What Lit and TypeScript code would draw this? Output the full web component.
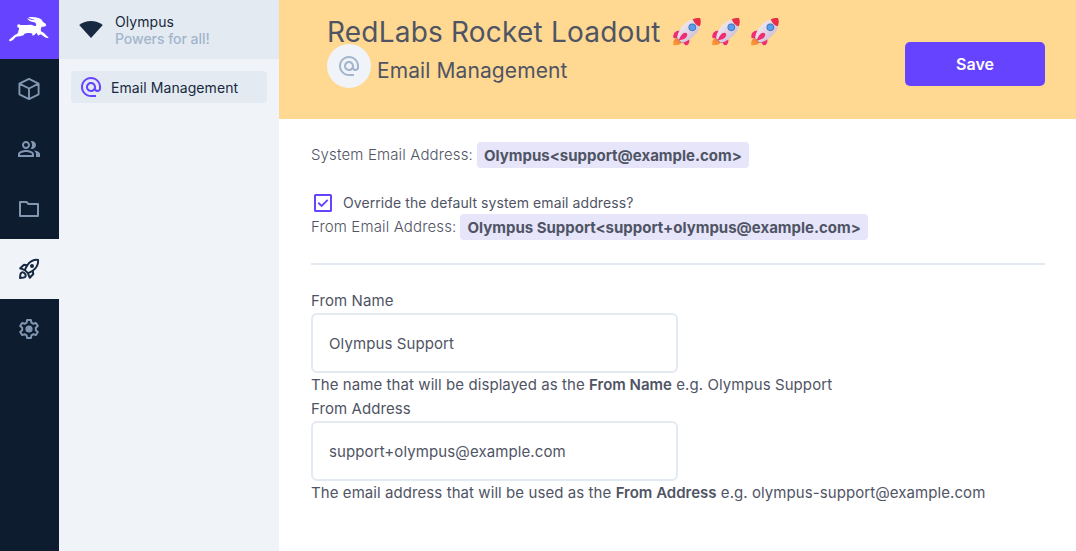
import { LitElement, html, css, svg } from "lit";
import { customElement } from "lit/decorators.js";

const AT = "M12,15C12.81,15 13.5,14.7 14.11,14.11C14.7,13.5 15,12.81 15,12C15,11.19 14.7,10.5 14.11,9.89C13.5,9.3 12.81,9 12,9C11.19,9 10.5,9.3 9.89,9.89C9.3,10.5 9,11.19 9,12C9,12.81 9.3,13.5 9.89,14.11C10.5,14.7 11.19,15 12,15M12,2C14.75,2 17.1,3 19.05,4.95C21,6.9 22,9.25 22,12V13.45C22,14.45 21.65,15.3 21,16C20.3,16.67 19.5,17 18.5,17C17.3,17 16.31,16.5 15.56,15.5C14.56,16.5 13.38,17 12,17C10.63,17 9.45,16.5 8.46,15.54C7.5,14.55 7,13.38 7,12C7,10.63 7.5,9.45 8.46,8.46C9.45,7.5 10.63,7 12,7C13.38,7 14.55,7.5 15.54,8.46C16.5,9.45 17,10.63 17,12V13.45C17,13.86 17.16,14.22 17.46,14.53C17.76,14.84 18.11,15 18.5,15C18.92,15 19.27,14.84 19.57,14.53C19.87,14.22 20,13.86 20,13.45V12C20,9.81 19.23,7.93 17.65,6.35C16.07,4.77 14.19,4 12,4C9.81,4 7.93,4.77 6.35,6.35C4.77,7.93 4,9.81 4,12C4,14.19 4.77,16.07 6.35,17.65C7.93,19.23 9.81,20 12,20H17V22H12C9.25,22 6.9,21 4.95,19.05C3,17.1 2,14.75 2,12C2,9.25 3,6.9 4.95,4.95C6.9,3 9.25,2 12,2Z";

const cube = svg`<path fill="none" stroke="currentColor" stroke-width="1.9" stroke-linejoin="round" d="M12 1.9 21.6 6.7V17.3L12 22.1 2.4 17.3V6.7ZM2.4 6.7 12 11.5 21.6 6.7M12 11.5V22.1"/>`;
const people = svg`<path fill="currentColor" d="M16.67 13.13C18.04 14.06 19 15.32 19 17v3h4v-3c0-2.18-3.57-3.47-6.33-3.87zM15 12c2.21 0 4-1.79 4-4s-1.79-4-4-4c-.47 0-.91.1-1.33.24C14.5 5.27 15 6.58 15 8s-.5 2.73-1.33 3.76c.42.14.86.24 1.33.24zM9 12c2.21 0 4-1.79 4-4s-1.79-4-4-4-4 1.79-4 4 1.79 4 4 4zm0-6c1.1 0 2 .9 2 2s-.9 2-2 2-2-.9-2-2 .9-2 2-2zM9 13c-2.67 0-8 1.34-8 4v3h16v-3c0-2.66-5.33-4-8-4zm6 5H3v-.99C3.2 16.29 6.3 15 9 15s5.8 1.29 6 2v1z"/>`;
const folder = svg`<path fill="none" stroke="currentColor" stroke-width="2" stroke-linejoin="round" d="M3 5H9.5L11.5 7H21V19H3Z"/>`;
const rocket = svg`<g fill="none" stroke="currentColor" stroke-width="2" stroke-linejoin="round"><path d="M21.1 2.9C16.3 2.5 12.6 5 10.2 8.3 9 10 8.3 11.6 7.9 13.1L10.9 16.1C12.4 15.7 14 15 15.7 13.8 19 11.4 21.5 7.7 21.1 2.9Z"/><path d="M10.2 8.3 7 7.7 3.2 11.2 7.9 13.1M15.7 13.8 16.3 17 12.8 20.8 10.9 16.1"/><path d="M3 21 3.4 17.4C3.7 15.6 5.1 14.8 6.8 15.6L8.4 17.2C9.2 18.9 8.4 20.3 6.6 20.6Z"/></g><circle cx="15" cy="9" r="2" fill="currentColor"/>`;
const gear = svg`<path fill="none" stroke="currentColor" stroke-width="2" stroke-linejoin="round" d="M10.1 3H13.9L14.4 5.6 16.4 6.8 18.9 5.9 20.8 9.1 18.8 10.8V13.2L20.8 14.9 18.9 18.1 16.4 17.2 14.4 18.4 13.9 21H10.1L9.6 18.4 7.6 17.2 5.1 18.1 3.2 14.9 5.2 13.2V10.8L3.2 9.1 5.1 5.9 7.6 6.8 9.6 5.6Z"/><circle cx="12" cy="12" r="3.6" fill="currentColor"/>`;
const checkbox = svg`<rect x="4" y="4" width="16" height="16" rx=".6" fill="none" stroke="currentColor" stroke-width="2"/><path fill="none" stroke="currentColor" stroke-width="1.9" d="M7.3 11.8 10.6 15 16.7 8.9"/>`;
const at = svg`<path fill="currentColor" d=${AT}></path>`;

const icon = (body: unknown) => html`<svg class="icon" viewBox="0 0 24 24">${body}</svg>`;

@customElement("rocket-emoji")
class RocketEmoji extends LitElement {
  static styles = css`
    :host { display: block; width: 30px; height: 30px; }
    .art { display: block; width: 30px; height: 30px; }
  `;
  render() {
    return html`<svg class="art" viewBox="0 0 90 90">
      <defs>
        <linearGradient id="b" x1="0" y1="0" x2="1" y2="1"><stop offset=".2" stop-color="#f0eaf3"/><stop offset=".8" stop-color="#cdbfd4"/></linearGradient>
        <linearGradient id="f" x1="1" y1="0" x2="0" y2="1"><stop offset="0" stop-color="#ef7437"/><stop offset="1" stop-color="#ff9f3a"/></linearGradient>
      </defs>
      <path fill="url(#f)" d="M14 60Q3 63 3 81Q20 84 29 74Z"/>
      <path fill="#f22c73" d="M31 38Q14 36 7 44Q2 52 5 61L27 59ZM49 55Q55 69 50 77Q46 83 39 81L28 64Z"/>
      <path fill="#5c4760" d="M13 59 31 76 35 72 19 55Z"/>
      <path fill="url(#b)" d="M15 60Q19 34 41 15Q53 5 67 4L84 20Q83 38 69 50Q51 69 30 74Z"/>
      <path fill="#e82f45" d="M62 4Q71-1 84 0Q89 12 83 25Q76 23 70 17Q64 11 62 4Z"/>
      <path fill="#f22c73" d="M38 44Q27 47 20 67Q40 65 45 54Q48 43 38 44Z"/>
      <circle cx="61" cy="28" r="11.5" fill="#4c74b8"/>
      <circle cx="61" cy="28" r="8.5" fill="#55a0ec"/>
    </svg>`;
  }
}

@customElement("app-root")
class AppRoot extends LitElement {
  static styles = css`
    :host { display: flex; height: 551px; background: #fff; color: #4f5464; font: 400 15px/24px Inter, sans-serif; overflow: hidden; }
    * { box-sizing: border-box; }
    .icon { display: block; width: 24px; height: 24px; flex: none; }
    .rail { width: 59px; flex: none; background: #0e1c2f; color: #8196b1; }
    .logo { display: block; width: 59px; height: 59px; background: #6644ff; }
    .tab { height: 60px; display: flex; align-items: center; padding-left: 17px; }
    .tab.active { background: #f0f4f9; color: #172940; }
    .nav { width: 220px; flex: none; background: #f0f4f9; color: #172940; }
    .project { height: 59px; background: #e4eaf1; display: flex; align-items: center; gap: 12px; padding-left: 20px; font-size: 14px; line-height: 17px; letter-spacing: .06px; }
    .fan { width: 24px; height: 24px; display: block; }
    .tagline { color: #a2b5cd; font-weight: 500; letter-spacing: -.03px; }
    .link { margin: 12px 12px 0; height: 32px; border-radius: 4px; background: #e4eaf1; display: flex; align-items: center; padding-left: 8px; gap: 8px; font-size: 14px; letter-spacing: .08px; }
    .link .icon { color: #6644ff; }
    .linktext { padding-top: 2px; }
    .main { flex: 1; min-width: 0; }
    .head { height: 119px; background: #ffd892; padding: 0 31px 0 48px; display: flex; justify-content: space-between; }
    .title { margin: 0; padding-top: 18px; height: 44px; display: flex; gap: 9px; font-size: 28px; line-height: 28px; font-weight: 400; white-space: nowrap; }
    .words { width: 336px; letter-spacing: .2px; }
    .sub { display: flex; gap: 6px; height: 44px; font-size: 21px; letter-spacing: .1px; }
    .disc { width: 44px; height: 44px; border-radius: 50%; background: #f0f4f9; color: #a2b5cd; display: flex; align-items: center; justify-content: center; }
    .subtext { padding-top: 15px; }
    .save { margin-top: 42px; width: 140px; height: 44px; border: 0; border-radius: 5px; background: #6644ff; color: #fff; font: 600 16px/44px Inter, sans-serif; padding: 0; }
    .body { padding: 23px 31px 0 32px; white-space: nowrap; letter-spacing: .08px; }
    .line { display: flex; height: 26px; line-height: 26px; gap: 4px; font-weight: 300; letter-spacing: .14px; }
    .chip { background: #e6e5fa; border-radius: 4px; padding: 1px 7px 0; font-weight: 700; letter-spacing: 0; }
    .check { display: flex; align-items: center; height: 24px; margin: 23px 0 -1px; gap: 8px; font-size: 14px; }
    .check .icon { color: #6644ff; }
    .rule { height: 2px; background: #e4eaf1; margin: 23px 0 24px; }
    .label, .hint { height: 24px; }
    .field { display: block; width: 367px; height: 60px; border: 2px solid #e4eaf1; border-radius: 6px; padding: 0 16px; font: 400 15px/24px Inter, sans-serif; letter-spacing: .1px; color: #4f5464; background: #fff; }
    .hint { letter-spacing: .075px; }
    .strong { font-weight: 600; letter-spacing: 0; }
  `;
  render() {
    return html`
      <div class="rail">
        <svg class="logo" viewBox="0 0 177 177"><path fill="#fff" d="M52 75Q55 70 62 75 80 76 92 74C101 74 101 80 108 77 110 72 107 69 103 67 91 66 85 62 81 55 89 59 98 61 107 61 98 58 88 56 85 52 98 49 116 51 125 59L129 66Q138 70 139 76 134 82 125 80 121 86 123 94L132 99 146 113Q140 116 134 111L122 103 114 107Q115 105 109 98 103 108 96 106 101 98 86 99 73 98 71 106 60 110 48 110 40 121 31 124 24 122 30 117 38 111 44 105 56 101 55 93 61 82 52 82 52 75Z"/></svg>
        <div class="tab">${icon(cube)}</div>
        <div class="tab">${icon(people)}</div>
        <div class="tab">${icon(folder)}</div>
        <div class="tab active">${icon(rocket)}</div>
        <div class="tab">${icon(gear)}</div>
      </div>
      <div class="nav">
        <div class="project">
          <svg class="fan" viewBox="0 0 24 24"><path fill="#172940" d="M.2 7Q5.5 3 12 3T23.8 7L12 20Z"/></svg>
          <div><div>Olympus</div><div class="tagline">Powers for all!</div></div>
        </div>
        <div class="link">${icon(at)}<span class="linktext">Email Management</span></div>
      </div>
      <div class="main">
        <div class="head">
          <div>
            <h1 class="title"><span class="words">RedLabs Rocket Loadout</span><rocket-emoji></rocket-emoji><rocket-emoji></rocket-emoji><rocket-emoji></rocket-emoji></h1>
            <div class="sub"><div class="disc">${icon(at)}</div><span class="subtext">Email Management</span></div>
          </div>
          <button class="save">Save</button>
        </div>
        <div class="body">
          <div class="line"><span>System Email Address:</span><span class="chip">Olympus&lt;support@example.com&gt;</span></div>
          <div class="check">${icon(checkbox)}<span>Override the default system email address?</span></div>
          <div class="line"><span>From Email Address:</span><span class="chip">Olympus Support&lt;support+olympus@example.com&gt;</span></div>
          <div class="rule"></div>
          <div class="label">From Name</div>
          <input class="field" .value=${"Olympus Support"} />
          <div class="hint">The name that will be displayed as the <span class="strong">From Name</span> e.g. Olympus Support</div>
          <div class="label">From Address</div>
          <input class="field" .value=${"support+olympus@example.com"} />
          <div class="hint">The email address that will be used as the <span class="strong">From Address</span> e.g. olympus-support@example.com</div>
        </div>
      </div>`;
  }
}
